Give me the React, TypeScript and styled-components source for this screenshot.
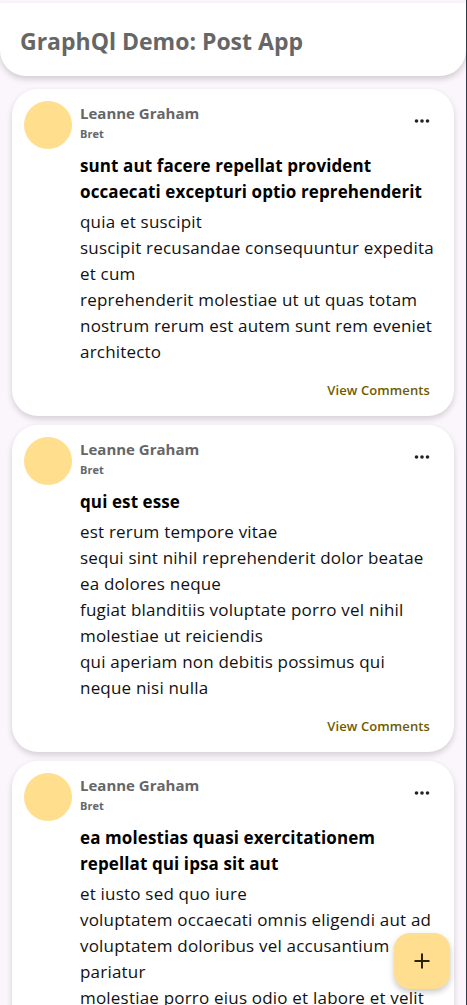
import React from "react";
import styled, { createGlobalStyle } from "styled-components";

const Global = createGlobalStyle`
  html, body { margin: 0; padding: 0; }
  body {
    background: #fbf6fb;
    font-family: "Open Sans", "Noto Sans", sans-serif;
    overflow: hidden;
  }
`;

const Page = styled.div`
  width: 466px;
  height: 1002px;
  overflow: hidden;
  border-right: 1px solid #2b3b4b;
  padding-top: 3px;
  box-sizing: content-box;
  position: relative;
`;

const Header = styled.header`
  height: 73px;
  background: #fff;
  border-radius: 0 0 26px 26px;
  box-shadow: 0 3px 6px rgba(0, 0, 0, 0.18);
  display: flex;
  align-items: center;
  padding: 0 20px;
`;

const Title = styled.h1`
  margin: 3px 0 0 0;
  font-size: 23px;
  font-weight: 700;
  color: #666;
`;

const List = styled.main`
  display: flex;
  flex-direction: column;
  gap: 9px;
  padding: 13px 12px 0 12px;
`;

const Card = styled.article`
  background: #fff;
  border-radius: 26px;
  box-shadow: 0 3px 6px rgba(0, 0, 0, 0.16);
  padding: 12px 14px 17px 12px;
  display: grid;
  grid-template-columns: 48px 1fr;
  column-gap: 8px;
`;

const Avatar = styled.div`
  width: 48px;
  height: 48px;
  border-radius: 50%;
  background: #ffde8d;
`;

const Content = styled.div`
  display: flex;
  flex-direction: column;
  min-width: 0;
`;

const TopRow = styled.div`
  display: flex;
  justify-content: space-between;
  align-items: flex-start;
`;

const Who = styled.div`
  display: flex;
  flex-direction: column;
`;

const Name = styled.div`
  font-size: 15px;
  line-height: 20px;
  font-weight: 700;
  color: #666;
  margin-top: 2px;
`;

const Handle = styled.div`
  font-size: 11px;
  line-height: 16px;
  font-weight: 700;
  color: #666;
  margin-top: 3px;
`;

const MoreButton = styled.button`
  border: 0;
  background: none;
  padding: 0;
  margin: 17px 10px 0 0;
  width: 16px;
  height: 6px;
  display: flex;
  cursor: pointer;
`;

const PostTitle = styled.h2`
  margin: 11px 0 4px 0;
  font-size: 17px;
  line-height: 26px;
  letter-spacing: 0.1px;
  font-weight: 700;
  color: #000;
`;

const Body = styled.p`
  margin: 0;
  font-size: 17px;
  line-height: 26px;
  letter-spacing: 0.2px;
  color: #111;
  white-space: pre-line;
`;

const Footer = styled.div`
  display: flex;
  justify-content: flex-end;
  margin-top: 16px;
  padding-right: 10px;
`;

const LinkButton = styled.button`
  border: 0;
  background: none;
  padding: 0;
  font-family: inherit;
  font-size: 13px;
  line-height: 18px;
  letter-spacing: 0.1px;
  font-weight: 600;
  color: #705a00;
  cursor: pointer;
`;

const Fab = styled.button`
  position: fixed;
  left: 394px;
  top: 933px;
  width: 56px;
  height: 56px;
  border-radius: 16px;
  border: 0;
  background: #ffdf8f;
  box-shadow: 0 3px 6px rgba(0, 0, 0, 0.22);
  display: flex;
  align-items: center;
  justify-content: center;
  cursor: pointer;
`;

const posts = [
  {
    title:
      "sunt aut facere repellat provident occaecati excepturi optio reprehenderit",
    body:
      "quia et suscipit\nsuscipit recusandae consequuntur expedita et cum\nreprehenderit molestiae ut ut quas totam\nnostrum rerum est autem sunt rem eveniet architecto",
  },
  {
    title: "qui est esse",
    body:
      "est rerum tempore vitae\nsequi sint nihil reprehenderit dolor beatae ea dolores neque\nfugiat blanditiis voluptate porro vel nihil molestiae ut reiciendis\nqui aperiam non debitis possimus qui neque nisi nulla",
  },
  {
    title: "ea molestias quasi exercitationem repellat qui ipsa sit aut",
    body:
      "et iusto sed quo iure\nvoluptatem occaecati omnis eligendi aut ad\nvoluptatem doloribus vel accusantium quis pariatur\nmolestiae porro eius odio et labore et velit aut",
  },
];

const Dots = () => (
  <svg width="16" height="6" viewBox="0 0 16 6">
    <circle cx="2.5" cy="3" r="1.8" fill="#222" />
    <circle cx="8" cy="3" r="1.8" fill="#222" />
    <circle cx="13.5" cy="3" r="1.8" fill="#222" />
  </svg>
);

const Plus = () => (
  <svg width="18" height="18" viewBox="0 0 18 18">
    <path d="M9 1.5v15M1.5 9h15" stroke="#2a2200" strokeWidth="2" />
  </svg>
);

export default function App() {
  return (
    <>
      <Global />
      <Page>
        <Header>
          <Title>GraphQl Demo: Post App</Title>
        </Header>
        <List>
          {posts.map((p, i) => (
            <Card key={i}>
              <Avatar />
              <Content>
                <TopRow>
                  <Who>
                    <Name>Leanne Graham</Name>
                    <Handle>Bret</Handle>
                  </Who>
                  <MoreButton aria-label="more">
                    <Dots />
                  </MoreButton>
                </TopRow>
                <PostTitle>{p.title}</PostTitle>
                <Body>{p.body}</Body>
                <Footer>
                  <LinkButton>View Comments</LinkButton>
                </Footer>
              </Content>
            </Card>
          ))}
        </List>
        <Fab aria-label="add">
          <Plus />
        </Fab>
      </Page>
    </>
  );
}
